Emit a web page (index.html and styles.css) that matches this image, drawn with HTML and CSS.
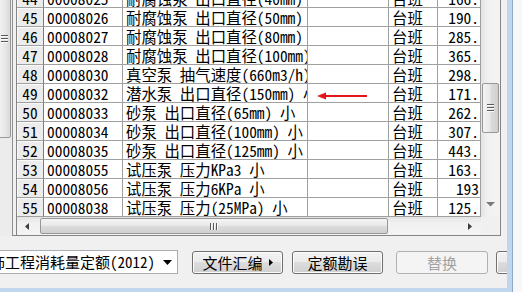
FILE: index.html
```html
<!DOCTYPE html>
<html lang="zh-CN">
<head>
<meta charset="utf-8">
<title>定额</title>
<link rel="stylesheet" href="styles.css">
</head>
<body>
<div class="screen">
  <div class="win">
    <div class="dialog">
      <div class="top">
        <div class="leftpane">
          <div class="lthumb"><span class="grip-h"><i></i><i></i><i></i></span></div>
        </div>
        <div class="panel">
          <div class="gridbox">
            <div class="rows">
              <div class="rh">44</div><div>00008025</div><div>耐腐蚀泵 出口直径(40mm)</div><div></div><div>台班</div><div class="num">166.</div>
              <div class="rh">45</div><div>00008026</div><div>耐腐蚀泵 出口直径(50mm)</div><div></div><div>台班</div><div class="num">190.</div>
              <div class="rh">46</div><div>00008027</div><div>耐腐蚀泵 出口直径(80mm)</div><div></div><div>台班</div><div class="num">285.</div>
              <div class="rh">47</div><div>00008028</div><div>耐腐蚀泵 出口直径(100mm)</div><div></div><div>台班</div><div class="num">365.</div>
              <div class="rh">48</div><div>00008030</div><div>真空泵 抽气速度(660m3/h)</div><div></div><div>台班</div><div class="num">298.</div>
              <div class="rh">49</div><div>00008032</div><div>潜水泵 出口直径(150mm) 小</div><div></div><div>台班</div><div class="num">171.</div>
              <div class="rh">50</div><div>00008033</div><div>砂泵 出口直径(65mm) 小</div><div></div><div>台班</div><div class="num">262.</div>
              <div class="rh">51</div><div>00008034</div><div>砂泵 出口直径(100mm) 小</div><div></div><div>台班</div><div class="num">307.</div>
              <div class="rh">52</div><div>00008035</div><div>砂泵 出口直径(125mm) 小</div><div></div><div>台班</div><div class="num">443.</div>
              <div class="rh">53</div><div>00008055</div><div>试压泵 压力KPa3 小</div><div></div><div>台班</div><div class="num">163.</div>
              <div class="rh">54</div><div>00008056</div><div>试压泵 压力6KPa 小</div><div></div><div>台班</div><div class="num">193</div>
              <div class="rh">55</div><div>00008038</div><div>试压泵 压力(25MPa) 小</div><div></div><div>台班</div><div class="num">125.</div>
              <svg class="pointer" width="52" height="10" viewBox="0 0 52 10">
                <polygon points="0,5 9,1.5 9,8.5" fill="#e3161b"/>
                <rect x="8" y="4" width="42" height="2" fill="#e3161b"/>
              </svg>
            </div>
            <div class="vscroll">
              <div class="vtrack">
                <div class="vthumb"><span class="grip-h"><i></i><i></i><i></i></span></div>
              </div>
              <div class="vbtn"><svg width="9" height="5" viewBox="0 0 9 5"><polygon points="0,0 9,0 4.5,4.5" fill="#7a7a7a"/></svg></div>
            </div>
            <div class="hscroll">
              <div class="hbtn hbtn-l"><svg width="4" height="7" viewBox="0 0 4 7"><polygon points="4,0 4,7 0,3.5" fill="#3c3c3c"/></svg></div>
              <div class="htrack">
                <div class="hthumb"><span class="grip-v"><i></i><i></i><i></i></span></div>
              </div>
              <div class="hbtn hbtn-r"><svg width="4" height="7" viewBox="0 0 4 7"><polygon points="0,0 0,7 4,3.5" fill="#3c3c3c"/></svg></div>
            </div>
            <div class="corner"></div>
          </div>
        </div>
      </div>
      <div class="bottom">
        <div class="combo">
          <span class="combo-text">装饰工程消耗量定额(2012)</span>
          <svg width="9" height="5" viewBox="0 0 9 5"><polygon points="0,0 9,0 4.5,5" fill="#000"/></svg>
        </div>
        <button class="btn b1" type="button">文件汇编<svg width="4" height="7" viewBox="0 0 4 7"><polygon points="0,0 0,7 4,3.5" fill="#000"/></svg></button>
        <button class="btn b2" type="button">定额勘误</button>
        <button class="btn b3" type="button" disabled>替换</button>
        <button class="btn b4" type="button"></button>
      </div>
    </div>
  </div>
  <div class="behind"></div>
</div>
</body>
</html>
```
FILE: styles.css
```css
html, body {
  margin: 0;
  padding: 0;
}
body {
  width: 522px;
  height: 292px;
  overflow: hidden;
  background: #f6f7f8;
  font-family: "Noto Sans Mono CJK SC", "Noto Sans CJK SC", sans-serif;
  font-size: 15px;
  font-feature-settings: "hwid";
  color: #000;
}
.screen {
  display: flex;
  height: 292px;
}
.win {
  flex: none;
  width: 513px;
  height: 292px;
  box-sizing: border-box;
  padding: 0 5px 4px 0;
  background: #c0d5ee;
  border-right: 1px solid #8fa8c8;
}
.dialog {
  width: 507px;
  height: 288px;
  background: #f0f0f0;
  overflow: hidden;
}
.behind {
  flex: 1;
  background: #f6f7f8;
}

/* ---------- top area ---------- */
.top {
  display: flex;
  margin-top: -11px;
  height: 247px;
}
.leftpane {
  flex: none;
  width: 13px;
  box-sizing: border-box;
  border-right: 1px solid #8c8f94;
  background: #ececec;
  overflow: hidden;
}
.lthumb {
  margin: -50px 0 0 -2px;
  width: 13px;
  height: 199px;
  box-sizing: border-box;
  border: 1px solid #9a9a9a;
  border-radius: 2px;
  background: linear-gradient(to right, #f3f3f3, #e8e8e8 50%, #d9d9d9);
  display: flex;
  align-items: center;
  justify-content: center;
}
.grip-h {
  display: flex;
  flex-direction: column;
  gap: 1px;
}
.grip-h i {
  display: block;
  width: 7px;
  height: 1px;
  background: #5a5a5a;
  border-bottom: 1px solid #fafafa;
}
.grip-v {
  display: flex;
  gap: 1px;
}
.grip-v i {
  display: block;
  width: 1px;
  height: 7px;
  background: #5a5a5a;
  border-right: 1px solid #fafafa;
}

.panel {
  flex: none;
  padding-left: 3px;
  border-right: 1px solid #848484;
  border-bottom: 1px solid #848484;
}
.gridbox {
  display: grid;
  grid-template-columns: 464px 19px;
  grid-template-rows: 228px 18px;
  border-left: 1px solid #848484;
  background: #fff;
}
.rows {
  position: relative;
  display: grid;
  grid-template-columns: 27px 79px 185px 81px 49px 43px;
  grid-auto-rows: 19px;
  overflow: hidden;
  font-size: 15.4px;
}
.rows > div {
  box-sizing: border-box;
  border-right: 1px solid #a0a0a0;
  border-bottom: 1px solid #a0a0a0;
  padding: 0 3px;
  line-height: 18px;
  white-space: nowrap;
  overflow: hidden;
}
.rows > .rh {
  padding: 0;
  text-align: center;
  background: #ececec;
  border-right-color: #7c7c7c;
  box-shadow: inset 1px 1px 0 #fafafa;
}
.rows > .num {
  text-align: right;
  padding: 0 1px 0 0;
}
.pointer {
  position: absolute;
  left: 300px;
  top: 102px;
}

.vscroll {
  display: flex;
  flex-direction: column;
  background: linear-gradient(to right, #e4e4e4, #f1f1f1 35%, #f3f3f3);
}
.vtrack {
  flex: 1;
  padding-left: 1px;
}
.vthumb {
  margin-top: 94px;
  width: 17px;
  height: 50px;
  box-sizing: border-box;
  border: 1px solid #979797;
  border-radius: 2px;
  background: linear-gradient(to right, #f4f4f4, #e9e9e9 45%, #dadada 55%, #d0d0d0);
  display: flex;
  align-items: center;
  justify-content: center;
}
.vbtn {
  height: 17px;
  display: flex;
  justify-content: center;
  align-items: flex-start;
  padding-top: 2px;
  box-sizing: border-box;
}
.hscroll {
  display: flex;
  background: linear-gradient(#e4e4e4, #f1f1f1 35%, #f3f3f3);
}
.hbtn {
  flex: none;
  display: flex;
  align-items: center;
}
.hbtn-l {
  width: 22px;
  padding-left: 8px;
  box-sizing: border-box;
}
.hbtn-r {
  width: 18px;
  padding-left: 5px;
  box-sizing: border-box;
}
.htrack {
  flex: 1;
  padding-top: 1px;
}
.hthumb {
  margin-left: 1px;
  width: 348px;
  height: 16px;
  box-sizing: border-box;
  border: 1px solid #979797;
  border-radius: 2px;
  background: linear-gradient(#f4f4f4, #e9e9e9 45%, #dadada 55%, #d0d0d0);
  display: flex;
  align-items: center;
  justify-content: center;
}
.corner {
  background: #f0f0f0;
}

/* ---------- bottom area ---------- */
.bottom {
  display: flex;
  align-items: flex-start;
  padding-top: 14px;
}
.combo {
  flex: none;
  margin-left: -29px;
  width: 207px;
  height: 24px;
  box-sizing: border-box;
  border: 1px solid #abadb3;
  background: #fff;
  display: flex;
  align-items: center;
  justify-content: space-between;
  padding: 0 5px 0 3px;
  white-space: nowrap;
}
.combo-text {
  line-height: 18px;
}
.btn {
  flex: none;
  margin: 1px 0 0 0;
  height: 23px;
  box-sizing: border-box;
  border: 1px solid #707070;
  border-radius: 3px;
  background: linear-gradient(#f2f2f2, #ebebeb 50%, #dddddd 50%, #cfcfcf);
  box-shadow: inset 0 0 0 1px #fbfbfb;
  font-family: inherit;
  font-size: 15px;
  line-height: 18px;
  color: #000;
  padding: 0;
  display: flex;
  align-items: center;
  justify-content: center;
  gap: 6px;
}
.b1 { margin-left: 14px; width: 91px; }
.b2 { margin-left: 9px; width: 91px; }
.b3 {
  margin-left: 13px;
  width: 92px;
  border-color: #adb2b5;
  background: #f4f4f4;
  box-shadow: none;
  color: #a3a3a3;
}
.b4 { margin-left: 8px; width: 91px; }
```
